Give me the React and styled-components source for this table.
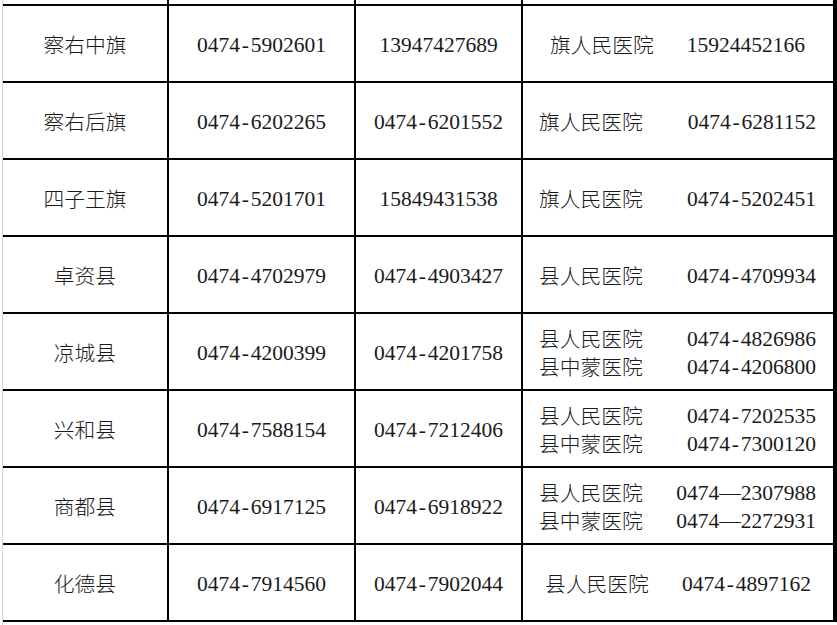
import { Fragment } from 'react';
import styled, { createGlobalStyle } from 'styled-components';

const GlobalStyle = createGlobalStyle`
  html, body {
    margin: 0;
    padding: 0;
    background: #ffffff;
  }
`;

const Page = styled.div`
  min-height: 100vh;
  padding-left: 2px;
  box-sizing: border-box;
  background: #ffffff;
`;

const Sheet = styled.div`
  min-height: 100vh;
  border-left: 1px solid #d2d2d6;
`;

const Table = styled.div`
  display: grid;
  grid-template-columns: 164px 185px 165px 310px;
  grid-template-rows: 4px repeat(8, 75px);
  gap: 2px;
  width: 832px;
  padding-right: 2px;
  padding-bottom: 2px;
  box-sizing: content-box;
  background: #000000;
  color: #1a1a1a;
`;

const Cell = styled.div`
  background: #ffffff;
  display: flex;
  align-items: center;
  justify-content: center;
`;

const Region = styled(Cell)`
  font-family: "Noto Sans CJK SC", sans-serif;
  font-weight: 300;
  font-size: 20.75px;
`;

const Number = styled(Cell)`
  font-family: "Liberation Serif", serif;
  font-size: 21.5px;
  padding-top: 3px;
`;

const HospitalCell = styled.div`
  background: #ffffff;
  display: grid;
  grid-template-columns: auto auto;
  justify-content: space-between;
  align-content: center;
  align-items: center;
  line-height: 26px;
  padding: 1px ${(p) => p.$pr}px 0 ${(p) => p.$pl}px;
`;

const HospitalName = styled.span`
  font-family: "Noto Sans CJK SC", sans-serif;
  font-weight: 300;
  font-size: 20.75px;
`;

const HospitalPhone = styled.span`
  font-family: "Liberation Serif", serif;
  font-size: 21.5px;
  padding-top: 2px;
`;

const Dash = styled.span`
  display: inline-block;
  width: 0.5em;
  text-align: center;
`;

const rows = [
  { name: '察右中旗', tel: '0474-5902601', mobile: '13947427689', hospitals: [['旗人民医院', '15924452166']], pl: 27, pr: 28 },
  { name: '察右后旗', tel: '0474-6202265', mobile: '0474-6201552', hospitals: [['旗人民医院', '0474-6281152']] },
  { name: '四子王旗', tel: '0474-5201701', mobile: '15849431538', hospitals: [['旗人民医院', '0474-5202451']] },
  { name: '卓资县', tel: '0474-4702979', mobile: '0474-4903427', hospitals: [['县人民医院', '0474-4709934']] },
  {
    name: '凉城县', tel: '0474-4200399', mobile: '0474-4201758',
    hospitals: [['县人民医院', '0474-4826986'], ['县中蒙医院', '0474-4206800']],
  },
  {
    name: '兴和县', tel: '0474-7588154', mobile: '0474-7212406',
    hospitals: [['县人民医院', '0474-7202535'], ['县中蒙医院', '0474-7300120']],
  },
  {
    name: '商都县', tel: '0474-6917125', mobile: '0474-6918922',
    hospitals: [['县人民医院', '0474—2307988'], ['县中蒙医院', '0474—2272931']],
  },
  { name: '化德县', tel: '0474-7914560', mobile: '0474-7902044', hospitals: [['县人民医院', '0474-4897162']], pl: 22, pr: 22 },
];

// hyphen drawn half-width, like the original document font
function Phone({ value }) {
  const parts = value.split('-');
  return parts.map((part, i) => (
    <span key={i}>
      {i > 0 && <Dash>-</Dash>}
      {part}
    </span>
  ));
}

export default function App() {
  return (
    <Page>
      <GlobalStyle />
      <Sheet>
        <Table>
          <Cell />
          <Cell />
          <Cell />
          <Cell />
          {rows.map((row) => (
            <Fragment key={row.name}>
              <Region>{row.name}</Region>
              <Number><Phone value={row.tel} /></Number>
              <Number><Phone value={row.mobile} /></Number>
              <HospitalCell $pl={row.pl ?? 16} $pr={row.pr ?? 17}>
                {row.hospitals.map(([h, t]) => (
                  <Fragment key={h}>
                    <HospitalName>{h}</HospitalName>
                    <HospitalPhone><Phone value={t} /></HospitalPhone>
                  </Fragment>
                ))}
              </HospitalCell>
            </Fragment>
          ))}
        </Table>
      </Sheet>
    </Page>
  );
}
